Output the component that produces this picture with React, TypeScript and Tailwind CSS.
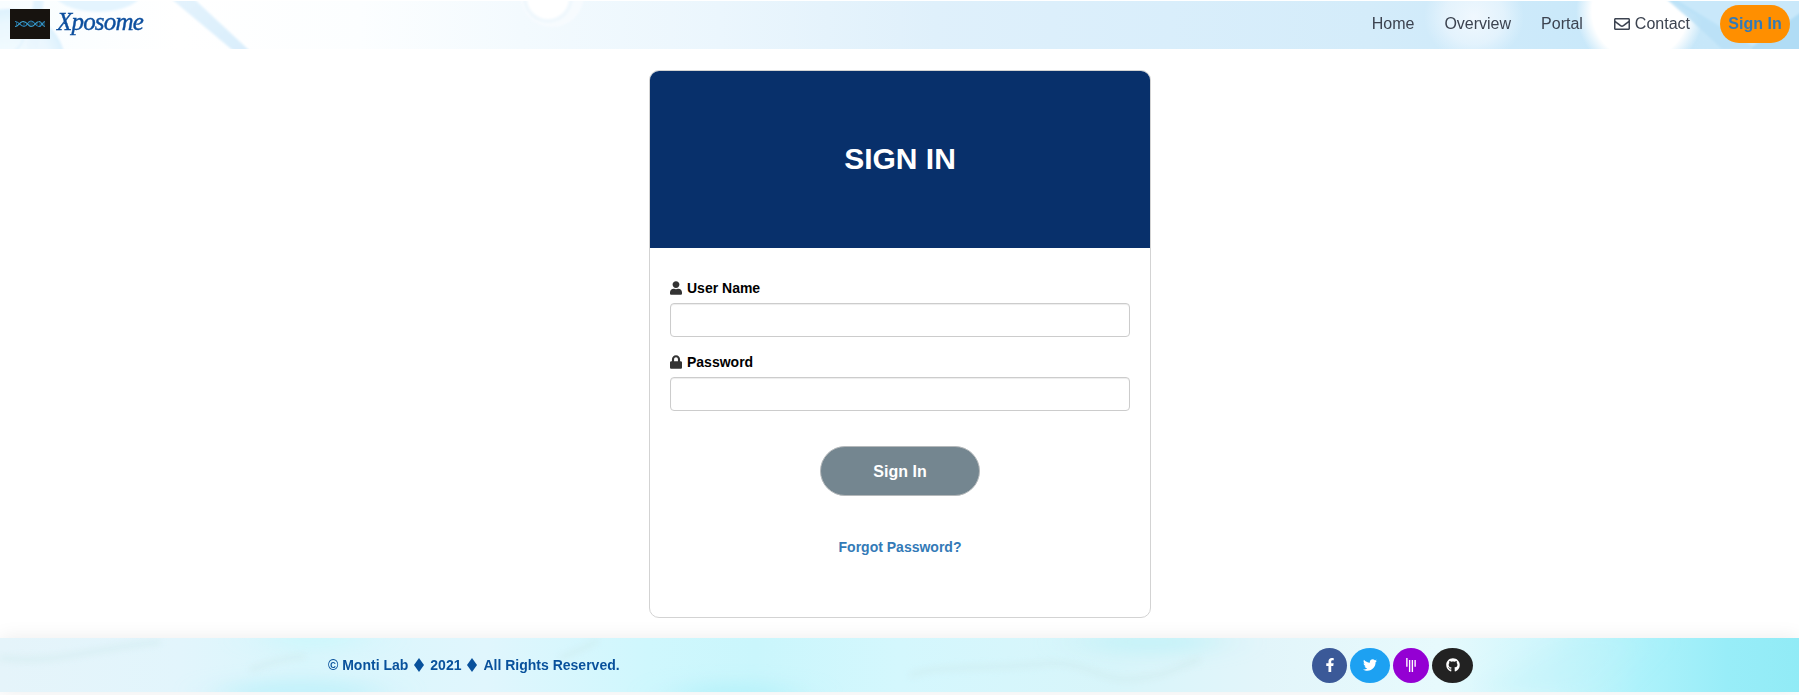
import type { ReactNode } from "react";
import { FaFacebookF, FaTwitter, FaGithub, FaGitter, FaRegEnvelope, FaUser, FaLock } from "react-icons/fa";

function HeaderArt() {
  return (
    <svg className="absolute inset-0 h-full w-full" viewBox="0 0 1799 48" preserveAspectRatio="none" aria-hidden="true">
      <defs>
        <linearGradient id="sky" x1="0" y1="0" x2="1" y2="0">
          <stop offset="0" stopColor="#f8fdff" />
          <stop offset="0.1" stopColor="#ffffff" />
          <stop offset="0.2" stopColor="#fcfeff" />
          <stop offset="0.29" stopColor="#f3fafe" />
          <stop offset="0.4" stopColor="#ebf6fd" />
          <stop offset="0.52" stopColor="#dff0fb" />
          <stop offset="0.65" stopColor="#d9eefb" />
          <stop offset="0.76" stopColor="#d4ecfa" />
          <stop offset="0.9" stopColor="#c8e8fa" />
          <stop offset="1" stopColor="#c6e6f8" />
        </linearGradient>
        <linearGradient id="beam" x1="0" y1="0" x2="1" y2="1">
          <stop offset="0" stopColor="#e4f3fd" />
          <stop offset="1" stopColor="#d9eefc" />
        </linearGradient>
        <radialGradient id="glow">
          <stop offset="0" stopColor="#fff" />
          <stop offset="0.75" stopColor="#fff" />
          <stop offset="1" stopColor="#fff" stopOpacity="0" />
        </radialGradient>
        <radialGradient id="halo">
          <stop offset="0" stopColor="#f0f8fe" />
          <stop offset="0.6" stopColor="#eef7fe" stopOpacity="0.65" />
          <stop offset="1" stopColor="#eaf6ff" stopOpacity="0" />
        </radialGradient>
        <radialGradient id="orb">
          <stop offset="0" stopColor="#f6fcff" />
          <stop offset="0.75" stopColor="#e8f6fe" />
          <stop offset="1" stopColor="#d6eefd" />
        </radialGradient>
        <filter id="edge">
          <feGaussianBlur stdDeviation="0.8" />
        </filter>
      </defs>
      <rect width="1799" height="48" fill="url(#sky)" />
      <g filter="url(#edge)">
        <path d="M34 -4H44L38 52H26Z" fill="#e4f4fe" />
        <circle cx="8" cy="66" r="58" fill="url(#orb)" opacity="0.85" />
        <circle cx="2" cy="32" r="22" fill="none" stroke="#e0f3fe" strokeWidth="2" opacity="0.8" />
        <ellipse cx="98" cy="-12" rx="46" ry="23" fill="#e4f4fe" />
        <path d="M169 -4H192L252 52H236Z" fill="url(#beam)" />
        <circle cx="552" cy="-6" r="32" fill="#f7fbfe" />
        <circle cx="548" cy="-3" r="25" fill="#f0f8fd" />
        <circle cx="548" cy="-3" r="21" fill="#fff" />
      </g>
      <ellipse cx="1474" cy="16" rx="50" ry="45" fill="url(#halo)" />
      <ellipse cx="1640" cy="10" rx="64" ry="64" fill="url(#glow)" />
      <g filter="url(#edge)">
        <path d="M1664 -4H1804V10L1752 46Z" fill="#c9e8fa" />
        <path d="M1664 -4H1672L1757 48H1722L1694 22Z" fill="#b9e0f7" opacity="0.85" />
        <path d="M1752 46L1804 9V52H1752Z" fill="#abdaf5" opacity="0.85" />
      </g>
    </svg>
  );
}

function FooterArt() {
  return (
    <svg className="absolute inset-0 h-full w-full" viewBox="0 0 1799 54" preserveAspectRatio="none" aria-hidden="true">
      <defs>
        <linearGradient id="water" x1="0" y1="0" x2="1" y2="0">
          <stop offset="0" stopColor="#e5f4fa" />
          <stop offset="0.1" stopColor="#e2f5fc" />
          <stop offset="0.17" stopColor="#d9f6fc" />
          <stop offset="0.27" stopColor="#e0f6fd" />
          <stop offset="0.36" stopColor="#cff7fd" />
          <stop offset="0.42" stopColor="#caf6fc" />
          <stop offset="0.5" stopColor="#d4f7fd" />
          <stop offset="0.62" stopColor="#d8f5fa" />
          <stop offset="0.7" stopColor="#e2f5fa" />
          <stop offset="0.8" stopColor="#e7fafd" />
          <stop offset="0.86" stopColor="#cff6fc" />
          <stop offset="0.91" stopColor="#aef2fb" />
          <stop offset="0.96" stopColor="#98edf8" />
          <stop offset="1" stopColor="#91ebf6" />
        </linearGradient>
        <filter id="soft" x="-20%" y="-50%" width="140%" height="200%">
          <feGaussianBlur stdDeviation="22 8" />
        </filter>
        <filter id="vein" x="-20%" y="-50%" width="140%" height="200%">
          <feGaussianBlur stdDeviation="3" />
        </filter>
      </defs>
      <rect width="1799" height="54" fill="url(#water)" />
      <g filter="url(#soft)">
        <ellipse cx="300" cy="54" rx="80" ry="12" fill="#c2f1fa" />
        <ellipse cx="315" cy="0" rx="50" ry="10" fill="#ccf7fc" />
        <ellipse cx="735" cy="56" rx="60" ry="12" fill="#b8f2fa" />
        <ellipse cx="1150" cy="4" rx="70" ry="12" fill="#c6f2f8" />
        <path d="M1480 54L1570 0H1640L1590 54Z" fill="#bcf3fb" opacity="0.4" />
      </g>
      <g fill="none" stroke="#cdeaec" strokeWidth="5" opacity="0.5" filter="url(#vein)">
        <path d="M0 20C60 26 80 12 160 4" />
        <path d="M250 32C270 24 285 20 305 18" />
        <path d="M560 20C575 14 590 8 598 2" />
        <path d="M910 38C930 26 1000 32 1050 25C1090 24 1100 46 1140 40C1170 38 1180 26 1200 22" />
      </g>
    </svg>
  );
}

function Helix() {
  return (
    <svg className="h-[30px] w-10 shrink-0 bg-[#17130f]" viewBox="0 0 40 30" fill="none" aria-hidden="true">
      <path d="M5 12.500C9 12 10 17.500 14 17.500C18 17.500 17 12 21 12C25 12 25 17.500 29 17.500C32 17.500 32 13 35 12.500" stroke="#2a86bd" strokeWidth="1.100" />
      <path d="M5 17.500C9 17.500 9 13 13 12.500C17 12 18 17.500 21 17.500C25 17.500 25 13 29 12.500C32 12 32 17.500 35 17.500" stroke="#3da0d0" strokeWidth="1.100" />
      <path d="M6.500 13V17M14 13V17M16.500 14V16M20 13V17M22 13V17M27 13.500V16.500M30 13V17M34 13V17" stroke="#2478a8" strokeWidth="0.7" />
    </svg>
  );
}

function Social({ label, className, children }: { label: string; className: string; children: ReactNode }) {
  return (
    <a href="#" aria-label={label} className={`flex h-[35px] items-center justify-center rounded-[50%] text-sm text-white ${className}`}>
      {children}
    </a>
  );
}

function Field({ icon, label, type }: { icon: ReactNode; label: string; type: string }) {
  return (
    <label className="block">
      <span className="flex h-5 items-center gap-[5px] text-sm font-bold text-black">
        <span className="text-[14px] text-[#333]">{icon}</span>
        {label}
      </span>
      <input
        type={type}
        className="mt-[5px] block h-[34px] w-full rounded border border-[#ccc] bg-white px-3 shadow-[inset_0_1px_1px_rgba(0,0,0,0.075)] outline-none"
      />
    </label>
  );
}

function Diamond() {
  return (
    <svg className="mx-[5px] h-[14px] w-3" viewBox="0 0 12 14" aria-hidden="true">
      <path d="M6 0L11 7L6 14L1 7Z" fill="#08519c" />
    </svg>
  );
}

export default function App() {
  return (
    <div className="flex h-[695px] w-full flex-col overflow-hidden bg-white font-['Liberation_Sans',Arial,sans-serif] text-[#333]">
      <header className="relative mt-px h-12 shrink-0">
        <HeaderArt />
        <div className="relative flex h-[46px] items-center justify-between pr-[9px] pl-[10px]">
          <a href="#" className="flex items-center gap-[7px]">
            <Helix />
            <span className="pb-1 font-['Liberation_Serif',serif] text-[25px] leading-8 font-medium tracking-[-0.8px] text-[#0d4f9e] italic [-webkit-text-stroke:0.4px_#0d4f9e]">
              Xposome
            </span>
          </a>
          <nav className="flex items-center text-base text-[#3c4350]">
            <a href="#" className="mr-[30px]">Home</a>
            <a href="#" className="mr-[30px]">Overview</a>
            <a href="#" className="mr-[31px]">Portal</a>
            <a href="#" className="mr-[30px] flex items-center gap-[5px]">
              <FaRegEnvelope />
              Contact
            </a>
            <a href="#" className="flex h-[38px] w-[70px] items-center justify-center rounded-[20px] bg-[#ff8f00] font-bold text-[#337ab7]">
              Sign In
            </a>
          </nav>
        </div>
      </header>

      <main className="flex h-[589px] shrink-0 justify-center pt-[21px] pl-px">
        <form className="flex h-[548px] w-[502px] flex-col overflow-hidden rounded-[10px] border border-[#d3d3d3] bg-white">
          <h1 className="flex h-[177px] shrink-0 items-center justify-center bg-[#08306b] pb-[3px] text-[30px] font-bold text-white">SIGN IN</h1>
          <div className="flex flex-col px-5 pt-[30px]">
            <div className="flex flex-col gap-[15px]">
              <Field icon={<FaUser className="w-3" />} label="User Name" type="text" />
              <Field icon={<FaLock className="w-3" />} label="Password" type="password" />
            </div>
            <button type="button" className="mt-[35px] h-[50px] w-40 self-center rounded-[25px] border border-[#b5b9bb] bg-[#748690] pt-0.5 text-base font-bold text-white">
              Sign In
            </button>
            <a href="#" className="mt-[41px] self-center text-sm font-bold text-[#337ab7]">Forgot Password?</a>
          </div>
        </form>
      </main>

      <footer className="relative h-[54px] shrink-0 shadow-[0_0_20px_rgba(0,0,0,0.08)]">
        <FooterArt />
        <div className="relative flex h-full items-center justify-between pr-[326px] pl-[328px]">
          <p className="flex items-center text-sm font-bold text-[#08519c]">
            © Monti Lab
            <Diamond />
            2021
            <Diamond />
            All Rights Reserved.
          </p>
          <div className="flex items-center gap-[3px]">
            <Social label="Facebook" className="w-[35px] bg-[#3b5998]"><FaFacebookF /></Social>
            <Social label="Twitter" className="w-10 bg-[#1da1f2]"><FaTwitter /></Social>
            <Social label="Gitter" className="w-9 bg-[#9400d3]"><FaGitter /></Social>
            <Social label="GitHub" className="w-[41px] bg-[#222]"><FaGithub /></Social>
          </div>
        </div>
      </footer>
    </div>
  );
}
